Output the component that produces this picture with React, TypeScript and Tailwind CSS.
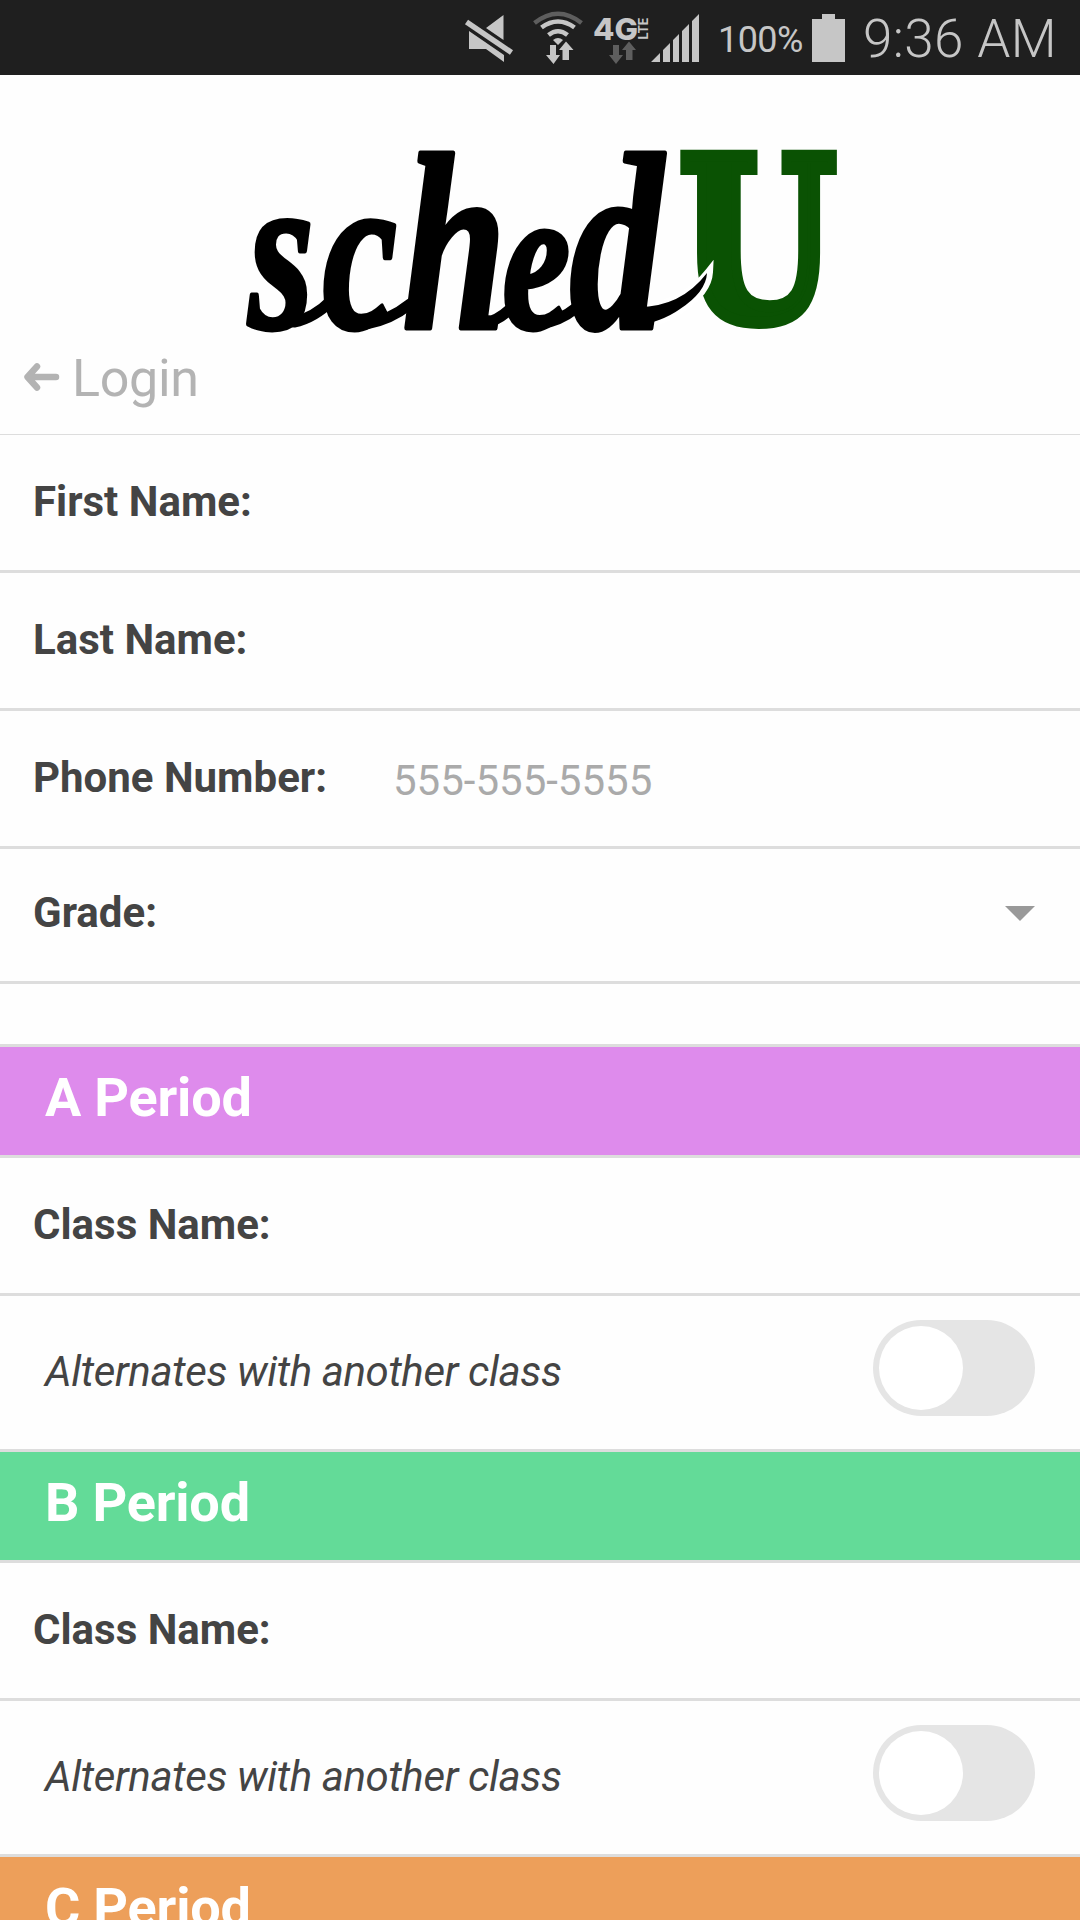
import React from "react";

function StatusBar() {
  return (
    <div className="flex h-[75px] w-full items-center justify-end bg-[#1f1f1f] text-[#c6c6c6]">
      <svg width="270" height="75" viewBox="450 0 270 75" className="shrink-0" fill="#c6c6c6">
        <path d="M503.5 15V40L486 28ZM469 31L504 55V62L486 49H469Z" />
        <path d="M466.5 22L511.5 52.5" stroke="#c6c6c6" strokeWidth="5.5" />
        <g fill="none" stroke="#c6c6c6" strokeWidth="4.6">
          <path d="M534.5 23Q558 4.500 581.500 23" stroke="#5e5e5e" strokeWidth="4.500" />
          <path d="M541.5 27.500Q558 15.500 574.500 27.500" />
          <path d="M548.5 35Q558 27.500 567.500 35" />
        </g>
        <path d="M553 40Q558 36 563 40L558 45Z" />
        <path d="M550 45H556V55H560L553.500 64L546 55H550Z" />
        <path d="M562.500 60H569V50H573.500L566 41.500L559 50H562.500Z" />
        <text x="593" y="40" fontFamily="Inter" fontWeight="800" fontSize="30" textLength="45" lengthAdjust="spacingAndGlyphs">4G</text>
        <text transform="translate(648 39.500) rotate(-90)" fontFamily="Inter" fontWeight="700" fontSize="12.500" textLength="22" lengthAdjust="spacingAndGlyphs">LTE</text>
        <g fill="#5e5e5e">
          <path d="M613 45H619V55H623L616 64L609 55H613Z" />
          <path d="M626 60H632.500V50H636L629 41.500L622 50H626Z" />
        </g>
        <path d="M651 62L660 53V62ZM663 62V50L670 43V62ZM673 62V40L679 34V62ZM682 62V31L689 24V62ZM692 62V21L699 14V62Z" />
      </svg>
      <span className="-ml-[2px] mt-[5px] w-[84px] shrink-0 whitespace-nowrap text-[36px] leading-none tracking-[-0.6px]">100%</span>
      <svg width="33" height="48" viewBox="0 0 33 48" className="mr-[18px] ml-[10px] shrink-0" fill="#c6c6c6">
        <path d="M10 0H23V5H33V48H0V5H10Z" />
      </svg>
      <span className="mt-[3px] w-[217px] shrink-0 whitespace-nowrap text-[53px] leading-none font-light tracking-[0.4px]">9:36 AM</span>
    </div>
  );
}

function Logo() {
  return (
    <svg width="600" height="190" viewBox="240 147 600 190" className="overflow-visible" role="img" aria-label="schedU">
      <text
        x="679"
        y="320"
        fill="#0a5203"
        stroke="#0a5203"
        strokeWidth="12"
        fontFamily="DejaVu Serif"
        fontWeight="700"
        fontSize="224"
        textLength="157"
        lengthAdjust="spacingAndGlyphs"
      >
        U
      </text>
      <path
        d="M650 307Q686 301 709 272Q708 292 680 310Q665 321 638 326"
        fill="#000"
        stroke="#fff"
        strokeWidth="8"
      />
      <g transform="scale(0.74 1)" fontFamily="Liberation Serif" fontStyle="italic" fontWeight="700" stroke="#000" strokeWidth="5" strokeLinejoin="round">
        <text y="328">
          <tspan x="336" fontSize="226">s</tspan>
          <tspan x="436" fontSize="226">c</tspan>
          <tspan x="544" fontSize="252">h</tspan>
          <tspan x="679" fontSize="206">e</tspan>
          <tspan x="770" fontSize="252">d</tspan>
        </text>
      </g>
      <g fill="none" stroke="#000" strokeWidth="11" strokeLinecap="round">
        <path d="M294 322Q314 318 332 300" />
        <path d="M366 324Q390 320 410 304" />
        <path d="M484 323Q497 321 509 310" />
        <path d="M540 324Q560 321 576 308" />
      </g>
      <path d="M636 307Q680 308 707 273Q706 292 680 309Q662 322 632 327Z" fill="#000" />
    </svg>
  );
}

function Header() {
  return (
    <header className="flex h-[360px] flex-col border-b border-[#dddddd]">
      <div className="flex h-[262px] justify-center pt-[72px]">
        <Logo />
      </div>
      <a className="flex items-center pl-6 text-[#b3b3b3]">
        <svg width="36" height="28" viewBox="0 0 36 28" className="mr-[12px] mb-[2px] shrink-0">
          <path d="M13 3.500L3.500 14L13 24.500M4 14H32" fill="none" stroke="currentColor" strokeWidth="6.500" strokeLinecap="round" strokeLinejoin="round" />
        </svg>
        <span className="mt-[2px] text-[52px] leading-[80px] tracking-[-0.3px]">Login</span>
      </a>
    </header>
  );
}

function Field({ label, placeholder }: { label: string; placeholder?: string }) {
  return (
    <div className="flex h-[138px] items-center border-b-3 border-[#dddddd] pb-[2px] pl-[33px]">
      <span className="w-[360px] text-[42px] leading-none font-bold">{label}</span>
      {placeholder && <span className="mt-[6px] text-[42px] leading-none text-[#aaaaaa]">{placeholder}</span>}
    </div>
  );
}

function Toggle() {
  return (
    <div className="mb-[10px] flex h-24 w-[162px] items-center rounded-full bg-[#e5e5e5] p-[6px]">
      <div className="size-[84px] rounded-full bg-white" />
    </div>
  );
}

function PeriodTitle({ title, color }: { title: string; color: string }) {
  return (
    <div className={`flex h-[111px] items-center border-b-3 border-[#dddddd] pb-[7px] pl-[45px] ${color}`}>
      <h2 className="text-[54px] leading-none font-bold tracking-[-0.2px] text-white">{title}</h2>
    </div>
  );
}

function Period({ title, color }: { title: string; color: string }) {
  return (
    <section>
      <PeriodTitle title={title} color={color} />
      <Field label="Class Name:" />
      <div className="flex h-[156px] items-center justify-between border-b-3 border-[#dddddd] pr-[45px] pl-[45px]">
        <span className="mb-[1px] text-[42px] leading-none tracking-[-0.38px] italic">Alternates with another class</span>
        <Toggle />
      </div>
    </section>
  );
}

export default function App() {
  return (
    <div className="h-[1920px] w-[1080px] overflow-hidden bg-[#fefefe] font-['Roboto',sans-serif] text-[#444444]">
      <StatusBar />
      <Header />
      <Field label="First Name:" />
      <Field label="Last Name:" />
      <Field label="Phone Number:" placeholder="555-555-5555" />
      <div className="flex h-[135px] items-center justify-between border-b-3 border-[#dddddd] pr-[45px] pl-[33px]">
        <span className="mb-[4px] text-[42px] leading-none font-bold">Grade:</span>
        <svg width="30" height="15" viewBox="0 0 30 15" className="mb-[4px]">
          <path d="M0 0H30L15 15Z" fill="#999999" />
        </svg>
      </div>
      <div className="h-[63px] border-b-3 border-[#dddddd]" />
      <Period title="A Period" color="bg-[#de8bec]" />
      <Period title="B Period" color="bg-[#63db98]" />
      <PeriodTitle title="C Period" color="bg-[#ed9f5a]" />
    </div>
  );
}
